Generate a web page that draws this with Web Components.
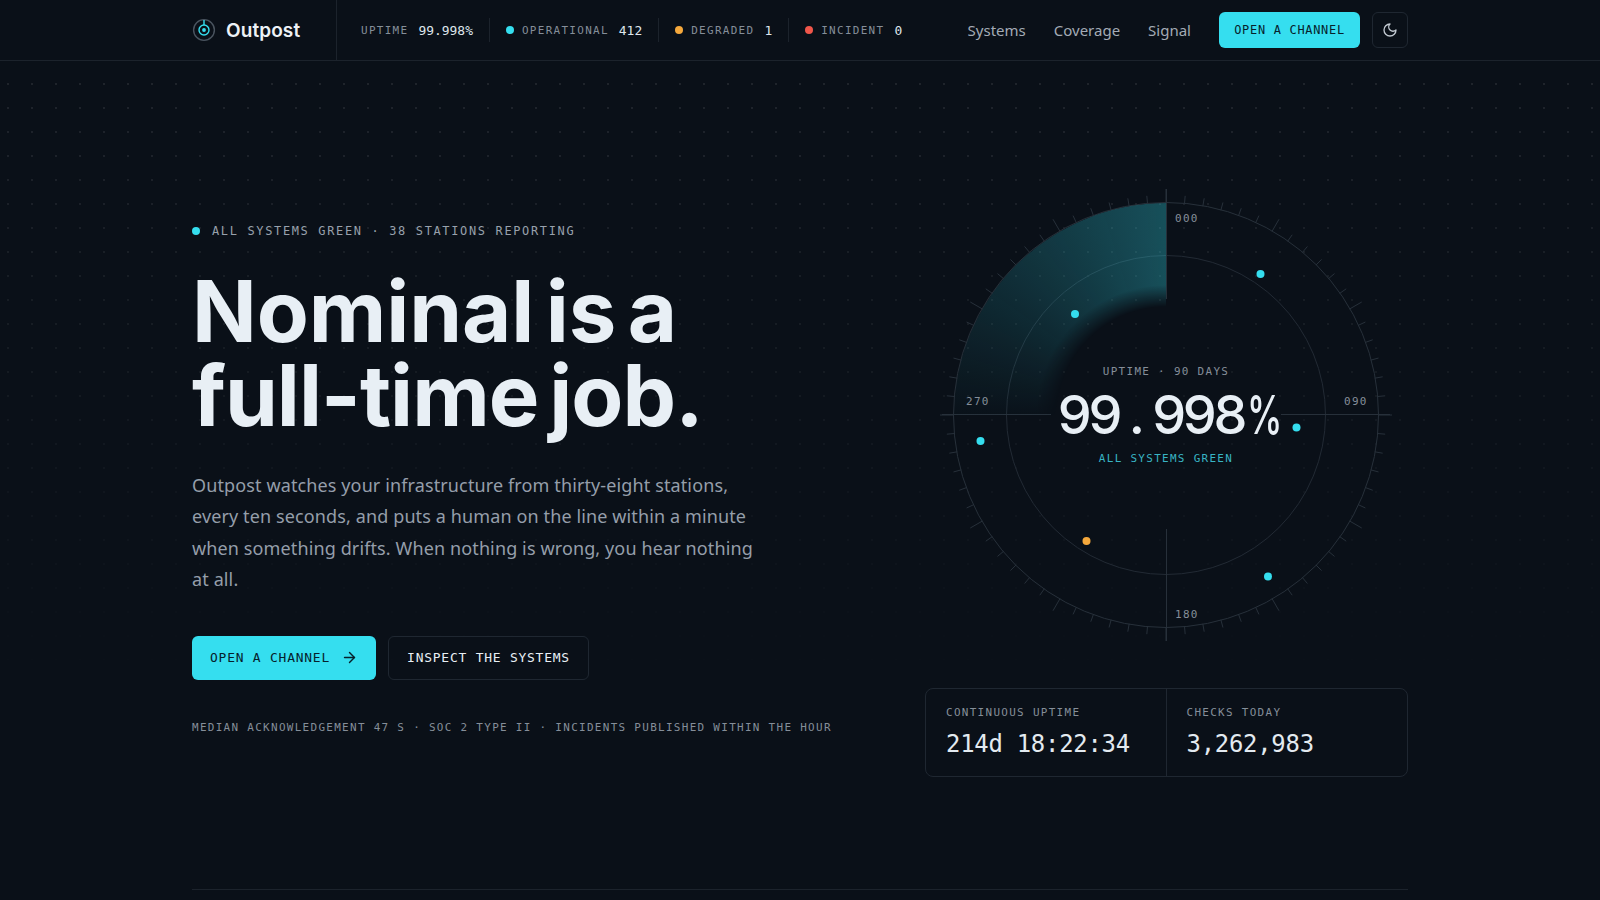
<!doctype html>
<html lang="en">
<head>
<meta charset="utf-8">
<title>Outpost</title>
<style>
    html, body { margin: 0; height: 100%; overflow: hidden; background: #0a1018; }
    body { color: #e8eff5; font-family: "Inter", sans-serif; }
</style>
</head>
<body>
<op-topbar>
    <op-stat label="UPTIME" value="99.998%"></op-stat>
    <op-stat label="OPERATIONAL" value="412" dot="#35deef"></op-stat>
    <op-stat label="DEGRADED" value="1" dot="#f5a83c"></op-stat>
    <op-stat label="INCIDENT" value="0" dot="#f0564a" last></op-stat>
</op-topbar>
<op-hero>
    <op-radar slot="side"></op-radar>
    <op-readouts slot="side">
        <op-readout label="CONTINUOUS UPTIME" value="214d 18:22:34"></op-readout>
        <op-readout label="CHECKS TODAY" value="3,262,983"></op-readout>
    </op-readouts>
</op-hero>

<script>
const MONO = `"DejaVu Sans Mono", "Liberation Mono", monospace`;
const BODY = `"Noto Sans", "Open Sans", sans-serif`;

class OpStat extends HTMLElement {
    connectedCallback() {
        const dot = this.getAttribute("dot");
        this.attachShadow({ mode: "open" }).innerHTML = /*html*/`
        <style>
            :host { display: flex; align-items: center; height: 24px; padding: 0 16px; border-right: 1px solid #1c232c; font-family: ${MONO}; }
            :host([last]) { border-right: 0; }
            i { width: 8px; height: 8px; border-radius: 50%; margin-right: 8px; background: ${dot}; }
            span { font-size: 10.95px; letter-spacing: .12em; color: #858e99; margin-right: 10px; }
            b { font-size: 12.95px; font-weight: 400; color: #dfe6ec; }
        </style>
        ${dot ? "<i></i>" : ""}<span>${this.getAttribute("label")}</span><b>${this.getAttribute("value")}</b>`;
    }
}

class OpTopbar extends HTMLElement {
    constructor() {
        super();
        this.attachShadow({ mode: "open" }).innerHTML = /*html*/`
        <style>
            :host { display: block; height: 60px; border-bottom: 1px solid #1c232c; }
            .row { width: 1216px; height: 60px; margin: 0 auto; display: flex; align-items: center; }
            .brand { display: flex; align-items: center; gap: 10px; width: 144px; height: 60px; border-right: 1px solid #1c232c; }
            .brand span { font: 600 19px "Inter", sans-serif; letter-spacing: .005em; color: #edf2f6; }
            .stats { display: flex; align-items: center; padding-left: 8px; }
            nav { margin-left: auto; display: flex; gap: 28px; padding-bottom: 1px; font: 400 15px ${BODY}; color: #a3abb5; }
            .cta { margin-left: 28px; width: 141px; height: 36px; border-radius: 6px; background: #35deef; color: #06212b; display: flex; align-items: center; justify-content: center; font: 500 11.95px ${MONO}; letter-spacing: .06em; }
            .moon { margin-left: 12px; width: 34px; height: 34px; border: 1px solid #1f2731; border-radius: 6px; display: flex; align-items: center; justify-content: center; }
        </style>
        <div class="row">
            <div class="brand">
                <svg width="24" height="24" viewBox="0 0 24 24" fill="none">
                    <circle cx="12" cy="12" r="10.4" stroke="#4a545f" stroke-width="1.4"/>
                    <circle cx="12" cy="12" r="5" stroke="#35deef" stroke-width="1.4"/>
                    <circle cx="12" cy="12" r="1.9" fill="#35deef"/>
                    <path d="M12 2v5" stroke="#35deef" stroke-width="1.4"/>
                </svg>
                <span>Outpost</span>
            </div>
            <div class="stats"><slot></slot></div>
            <nav><span>Systems</span><span>Coverage</span><span>Signal</span></nav>
            <div class="cta">OPEN A CHANNEL</div>
            <div class="moon">
                <svg width="16" height="16" viewBox="0 0 24 24" fill="none" stroke="#c3cad2" stroke-width="2" stroke-linecap="round" stroke-linejoin="round"><path d="M12 3a6 6 0 0 0 9 9 9 9 0 1 1-9-9Z"/></svg>
            </div>
        </div>`;
    }
}

class OpHero extends HTMLElement {
    constructor() {
        super();
        this.attachShadow({ mode: "open" }).innerHTML = /*html*/`
        <style>
            :host { display: block; position: relative; }
            .grid-dots {
                position: absolute; left: 0; right: 0; top: 0; height: 640px;
                background: radial-gradient(circle at center, rgba(255,255,255,.09) 1px, transparent 1.6px) -4px 11px / 24px 24px;
                -webkit-mask-image: linear-gradient(to bottom, #000, transparent);
                mask-image: linear-gradient(to bottom, #000, transparent);
            }
            .wrap { position: relative; width: 1216px; margin: 0 auto; height: 829px; display: flex; flex-direction: column; }
            .cols { display: grid; grid-template-columns: 1fr 483px; padding-top: 124px; }
            .left { padding-top: 39px; }
            .eyebrow { display: flex; align-items: center; gap: 12px; font: 400 11.95px/14px ${MONO}; letter-spacing: .14em; color: #98a1ac; }
            .eyebrow i { width: 8px; height: 8px; border-radius: 50%; background: #35deef; }
            h1 { margin: 32px 0 0; font: 700 85px/84px "Inter", sans-serif; word-spacing: -.1em; color: #e8eff5; }
            h1 span { display: block; }
            h1 .one { letter-spacing: -.001em; }
            h1 .two { letter-spacing: -.011em; }
            p { margin: 32px 0 0; font: 400 18px/31.35px ${BODY}; letter-spacing: .12px; color: #959eaa; white-space: nowrap; }
            .actions { display: flex; gap: 12px; margin-top: 41px; }
            .btn { height: 44px; border-radius: 6px; padding-bottom: 1px; display: flex; align-items: center; justify-content: center; gap: 11px; font: 500 12.95px ${MONO}; letter-spacing: .06em; box-sizing: border-box; }
            .primary { width: 184px; background: #35deef; color: #06212b; }
            .secondary { width: 201px; border: 1px solid #1f2731; color: #e8eff5; }
            .note { margin-top: 41px; font: 400 10.95px/14px ${MONO}; letter-spacing: .12em; color: #858e99; white-space: nowrap; }
            .side { display: flex; flex-direction: column; align-items: center; }
            hr { margin: auto 0 0; border: 0; border-top: 1px solid #1c232c; }
        </style>
        <div class="grid-dots"></div>
        <div class="wrap">
            <div class="cols">
                <div class="left">
                    <div class="eyebrow"><i></i>ALL SYSTEMS GREEN · 38 STATIONS REPORTING</div>
                    <h1><span class="one">Nominal is a</span><span class="two">full-time job.</span></h1>
                    <p>Outpost watches your infrastructure from thirty-eight stations,<br>every ten seconds, and puts a human on the line within a minute<br>when something drifts. When nothing is wrong, you hear nothing<br>at all.</p>
                    <div class="actions">
                        <div class="btn primary">OPEN A CHANNEL
                            <svg width="17" height="17" viewBox="0 0 24 24" fill="none" stroke="#06212b" stroke-width="2" stroke-linecap="round" stroke-linejoin="round"><path d="M5 12h14"/><path d="m12 5 7 7-7 7"/></svg>
                        </div>
                        <div class="btn secondary">INSPECT THE SYSTEMS</div>
                    </div>
                    <div class="note">MEDIAN ACKNOWLEDGEMENT 47 S · SOC 2 TYPE II · INCIDENTS PUBLISHED WITHIN THE HOUR</div>
                </div>
                <div class="side"><slot name="side"></slot></div>
            </div>
            <hr>
        </div>`;
    }
}

class OpRadar extends HTMLElement {
    constructor() {
        super();
        // centre of the scope is 230,230
        let ticks = "";
        for (let a = 0; a < 360; a += 5) {
            const long = a % 30 == 0;
            const rad = a * Math.PI / 180;
            const r2 = long ? 226 : 220;
            ticks += `<line x1="${230 + 212 * Math.sin(rad)}" y1="${230 - 212 * Math.cos(rad)}" x2="${230 + r2 * Math.sin(rad)}" y2="${230 - r2 * Math.cos(rad)}"/>`;
        }
        const blips = [[94.5, -141, "#35deef"], [-91, -101, "#35deef"], [130.5, 12.5, "#35deef"], [-185.5, 26, "#35deef"], [-79.5, 126, "#f5a83c"], [102, 161.5, "#35deef"]]
            .map(([x, y, c]) => `<circle cx="${230 + x}" cy="${230 + y}" r="4" fill="${c}"/>`).join("");
        this.attachShadow({ mode: "open" }).innerHTML = /*html*/`
        <style>
            :host { display: grid; position: relative; width: 460px; height: 460px; margin-right: 1px; place-items: center; }
            :host > * { grid-area: 1 / 1; }
            .wedge {
                width: 424px; height: 424px; border-radius: 50%;
                background: conic-gradient(from 270deg, rgba(53,222,239,.01), rgba(53,222,239,.31) 90deg, transparent 90deg);
                -webkit-mask-image: radial-gradient(circle, transparent 108px, #000 130px);
                mask-image: radial-gradient(circle, transparent 108px, #000 130px);
            }
            svg { width: 460px; height: 460px; }
            .mark { position: absolute; font: 400 10.95px/14px ${MONO}; letter-spacing: .12em; color: #858e99; }
            .centre { display: flex; flex-direction: column; align-items: center; font-family: ${MONO}; }
            .cap { font-size: 10.95px; line-height: 14px; letter-spacing: .12em; color: #858e99; }
            .num { display: flex; font: 500 54px/60px "Inter", sans-serif; font-feature-settings: "tnum"; letter-spacing: -.08em; color: #e8eff5; margin: 6px 0 7px 6px; }
            .num .pt { width: 34px; text-align: center; margin-left: -1px; }
            .num .pc { width: 34px; margin-left: 3px; transform: scaleX(.66); transform-origin: left center; }
            .sub { font-size: 10.95px; line-height: 14px; letter-spacing: .12em; color: #38b4c4; }
        </style>
        <div class="wedge"></div>
        <svg viewBox="0 0 460 460" fill="none">
            <circle cx="230" cy="230" r="212.5" stroke="#27303a"/>
            <circle cx="230" cy="230" r="159.5" stroke="#222a34"/>
            <g stroke="#27303a">
                ${ticks}
                <path d="M230.5 4v110M230.5 344v112M6 229.5h109M345 229.5h109"/>
            </g>
            ${blips}
        </svg>
        <div class="centre">
            <div class="cap">UPTIME · 90 DAYS</div>
            <div class="num"><span>99</span><span class="pt">.</span><span>998</span><span class="pc">%</span></div>
            <div class="sub">ALL SYSTEMS GREEN</div>
        </div>
        <span class="mark" style="left:239px;top:27px">000</span>
        <span class="mark" style="left:408px;top:210px">090</span>
        <span class="mark" style="left:239px;top:423px">180</span>
        <span class="mark" style="left:30px;top:210px">270</span>`;
    }
}

class OpReadouts extends HTMLElement {
    constructor() {
        super();
        this.attachShadow({ mode: "open" }).innerHTML = /*html*/`
        <style>
            :host { display: grid; grid-template-columns: 1fr 1fr; width: 483px; box-sizing: border-box; height: 89px; margin-top: 43px; border: 1px solid #1f2731; border-radius: 8px; }
        </style>
        <slot></slot>`;
    }
}

class OpReadout extends HTMLElement {
    connectedCallback() {
        this.attachShadow({ mode: "open" }).innerHTML = /*html*/`
        <style>
            :host { display: block; padding: 17px 20px; font-family: ${MONO}; }
            :host(:first-child) { border-right: 1px solid #1f2731; }
            div { font-size: 10.95px; line-height: 14px; letter-spacing: .12em; color: #858e99; }
            b { display: block; margin-top: 9px; font-size: 23.9px; line-height: 30px; font-weight: 400; letter-spacing: -.01em; color: #e3eaf0; }
        </style>
        <div>${this.getAttribute("label")}</div><b>${this.getAttribute("value")}</b>`;
    }
}

customElements.define("op-stat", OpStat);
customElements.define("op-topbar", OpTopbar);
customElements.define("op-hero", OpHero);
customElements.define("op-radar", OpRadar);
customElements.define("op-readouts", OpReadouts);
customElements.define("op-readout", OpReadout);
</script>
</body>
</html>
